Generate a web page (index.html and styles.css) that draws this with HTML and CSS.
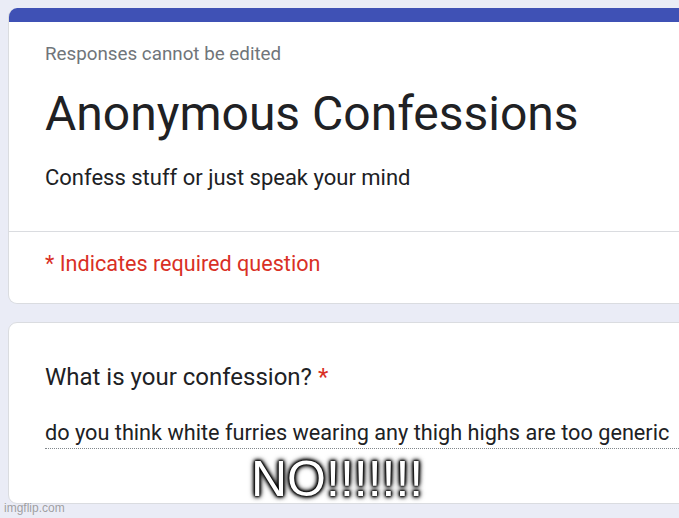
FILE: index.html
```html
<!DOCTYPE html>
<html>
<head>
<meta charset="utf-8">
<link rel="stylesheet" href="styles.css">
</head>
<body>
<div class="page">
  <div class="card header-card">
    <div class="bar"></div>
    <div class="head-body">
      <div class="note">Responses cannot be edited</div>
      <div class="title">Anonymous Confessions</div>
      <div class="desc">Confess stuff or just speak your mind</div>
    </div>
    <div class="divider"></div>
    <div class="required">* Indicates required question</div>
  </div>
  <div class="card question-card">
    <div class="question">What is your confession? <span class="star">*</span></div>
    <div class="answer">do you think white furries wearing any thigh highs are too generic</div>
  </div>
  <div class="meme">NO!!!!!!!</div>
  <div class="watermark">imgflip.com</div>
</div>
</body>
</html>
```
FILE: styles.css
```css
html, body {
  margin: 0;
  padding: 0;
  background: #eaecf6;
  overflow: hidden;
  width: 679px;
  height: 518px;
}
.page {
  position: relative;
  padding: 8px 0 0 8px;
  display: flex;
  flex-direction: column;
  gap: 18px;
  font-family: Roboto, "Liberation Sans", sans-serif;
  color: #202124;
}
.card {
  width: 720px;
  background: #fff;
  border: 1px solid #dadce0;
  border-radius: 9px;
  box-sizing: border-box;
  overflow: hidden;
}
.header-card {
  border-top: none;
}
.bar {
  height: 14px;
  background: #3f51b5;
  margin: 0 -1px;
}
.head-body {
  padding: 20px 36px 41px 36px;
}
.note {
  font-size: 18.8px;
  line-height: 24px;
  color: #70757a;
}
.title {
  font-size: 48px;
  line-height: 56px;
  margin-top: 20px;
}
.desc {
  font-size: 22px;
  line-height: 24px;
  margin-top: 24px;
}
.divider {
  height: 1px;
  background: #dadce0;
}
.required {
  font-size: 21.6px;
  line-height: 24px;
  color: #d93025;
  padding: 20px 36px 27px 36px;
}
.question-card {
  padding: 40px 0 54px 36px;
}
.question {
  font-size: 24px;
  line-height: 28px;
}
.star {
  color: #d93025;
}
.answer {
  margin-top: 30px;
  font-size: 21.7px;
  line-height: 24px;
  padding-bottom: 3px;
  border-bottom: 1px dotted #80868b;
  white-space: nowrap;
}
.meme {
  position: absolute;
  left: 251px;
  top: 455px;
  font-family: "Liberation Sans", Arial, sans-serif;
  font-size: 50px;
  line-height: 49px;
  color: #fff;
  text-shadow: 0 0 1px #000, 0 0 2px #000, 0 0 3px #000, 0 0 4px #000, 0 0 5px #000, 0 0 6px #000;
}
.watermark {
  position: absolute;
  left: 4px;
  top: 501px;
  font-family: "Liberation Sans", Arial, sans-serif;
  font-size: 12px;
  line-height: 14px;
  color: rgba(150, 150, 150, 0.9);
}
```
